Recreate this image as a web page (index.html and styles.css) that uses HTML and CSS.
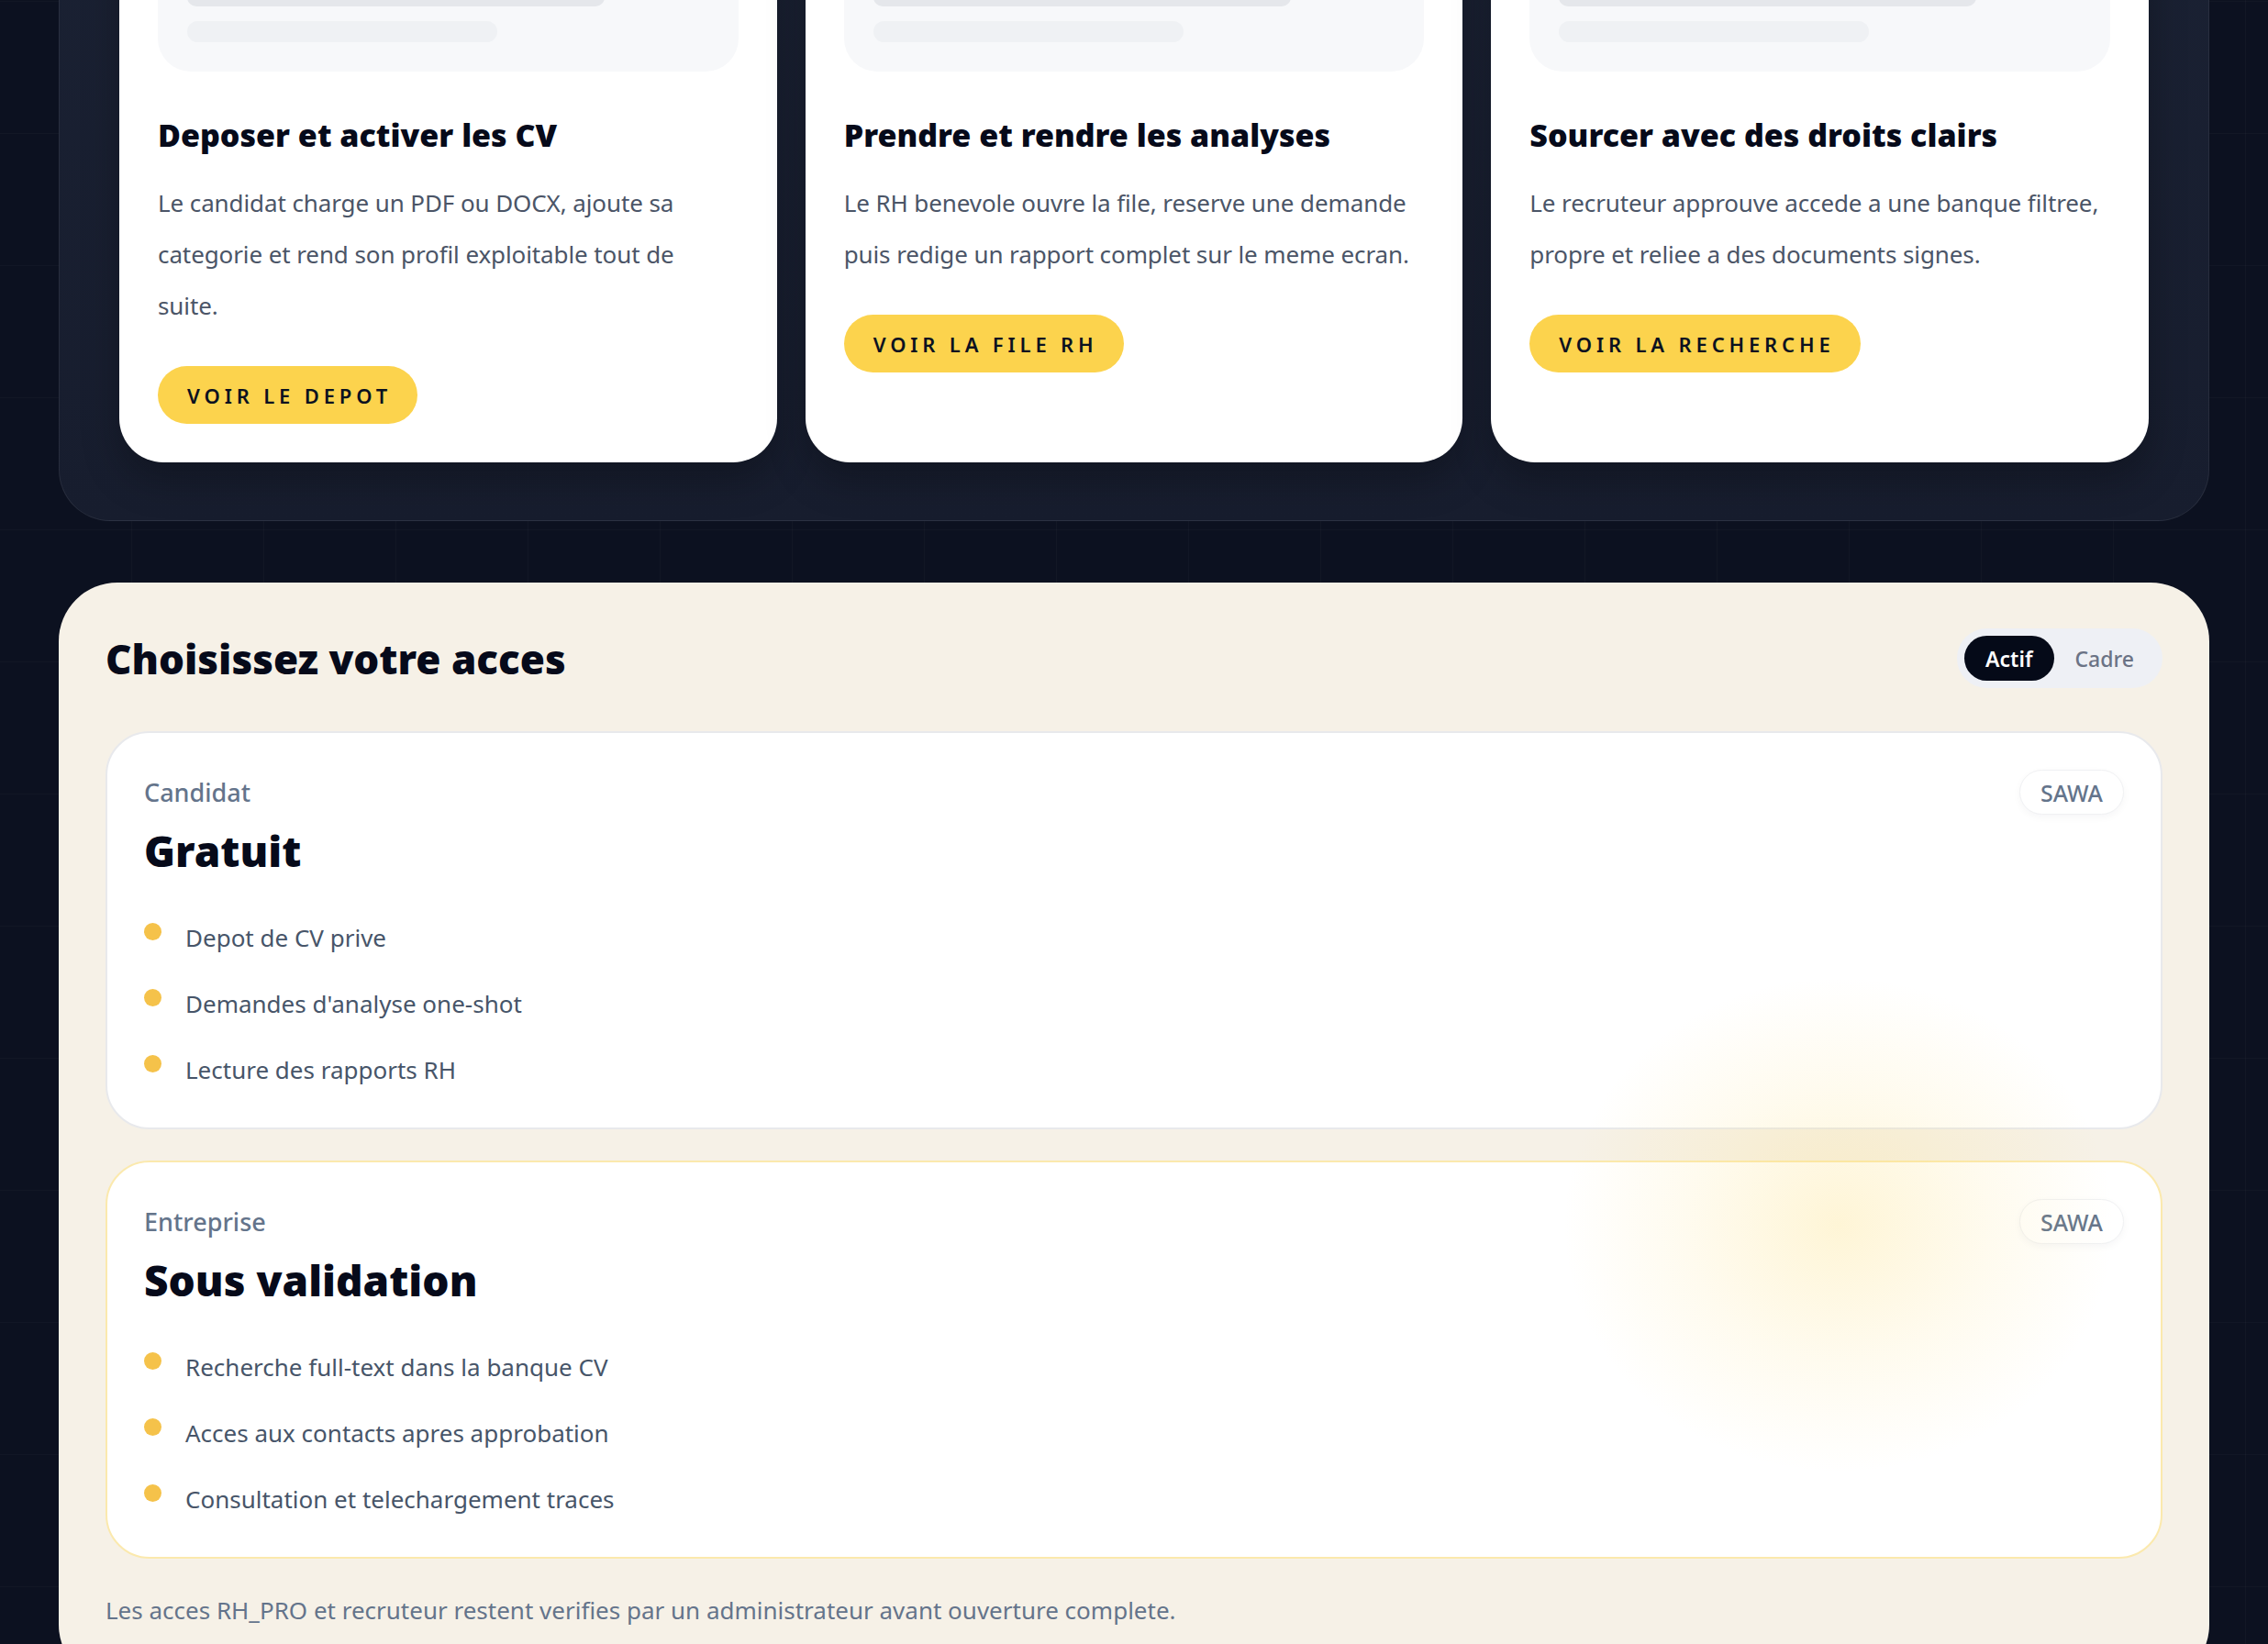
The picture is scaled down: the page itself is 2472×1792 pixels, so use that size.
FILE: index.html
```html
<!DOCTYPE html>
<html lang="fr">

<head>
    <meta charset="UTF-8">
    <meta name="viewport" content="width=device-width, initial-scale=1.0">
    <title>SAWA - Acces</title>
    <link rel="stylesheet" href="styles.css">
</head>

<body>
    <main class="page">
        <section class="flow">
            <div class="flow-grid">
                <article class="step">
                    <div class="step-preview">
                        <span class="bar bar-dark"></span>
                        <span class="bar bar-light"></span>
                    </div>
                    <h3>Deposer et activer les CV</h3>
                    <p>Le candidat charge un PDF ou DOCX, ajoute sa categorie et rend son profil exploitable tout de suite.</p>
                    <a class="btn-yellow" href="#">Voir le depot</a>
                </article>

                <article class="step">
                    <div class="step-preview">
                        <span class="bar bar-dark"></span>
                        <span class="bar bar-light"></span>
                    </div>
                    <h3>Prendre et rendre les analyses</h3>
                    <p>Le RH benevole ouvre la file, reserve une demande puis redige un rapport complet sur le meme ecran.</p>
                    <a class="btn-yellow" href="#">Voir la file RH</a>
                </article>

                <article class="step">
                    <div class="step-preview">
                        <span class="bar bar-dark"></span>
                        <span class="bar bar-light"></span>
                    </div>
                    <h3>Sourcer avec des droits clairs</h3>
                    <p>Le recruteur approuve accede a une banque filtree, propre et reliee a des documents signes.</p>
                    <a class="btn-yellow" href="#">Voir la recherche</a>
                </article>
            </div>
        </section>

        <section class="access">
            <div class="glow"></div>

            <div class="access-head">
                <h2>Choisissez votre acces</h2>
                <div class="toggle">
                    <button class="active">Actif</button>
                    <button>Cadre</button>
                </div>
            </div>

            <div class="plans">
                <article class="plan">
                    <div class="plan-head">
                        <span class="plan-label">Candidat</span>
                        <span class="badge">SAWA</span>
                    </div>
                    <h3>Gratuit</h3>
                    <ul>
                        <li>Depot de CV prive</li>
                        <li>Demandes d'analyse one-shot</li>
                        <li>Lecture des rapports RH</li>
                    </ul>
                </article>

                <article class="plan plan-pro">
                    <div class="plan-head">
                        <span class="plan-label">Entreprise</span>
                        <span class="badge">SAWA</span>
                    </div>
                    <h3>Sous validation</h3>
                    <ul>
                        <li>Recherche full-text dans la banque CV</li>
                        <li>Acces aux contacts apres approbation</li>
                        <li>Consultation et telechargement traces</li>
                    </ul>
                </article>
            </div>

            <p class="note">Les acces RH_PRO et recruteur restent verifies par un administrateur avant ouverture complete.</p>
        </section>
    </main>
</body>

</html>
```

FILE: styles.css
```css
* {
    margin: 0;
    padding: 0;
    box-sizing: border-box;
}

html,
body {
    height: 100%;
    overflow: hidden;
}

body {
    font-family: 'Noto Sans', 'Open Sans', sans-serif;
    background-color: #0c1120;
    background-image:
        linear-gradient(rgba(255, 255, 255, 0.025) 1px, transparent 1px),
        linear-gradient(90deg, rgba(255, 255, 255, 0.025) 1px, transparent 1px);
    background-size: 144px 144px;
    background-position: -1px 1px;
    color: #0b1120;
}

.page {
    padding: 0 64px;
}

/* top: the three steps (page is scrolled, top of the cards is cut) */

.flow {
    margin-top: -270px;
    padding: 65px 65px 63px;
    border: 1px solid rgba(255, 255, 255, 0.07);
    border-radius: 56px;
    background: linear-gradient(180deg, #1b2234 0%, #171d2e 100%);
}

.flow-grid {
    display: grid;
    grid-template-columns: repeat(3, 1fr);
    gap: 31px;
}

.step {
    background: #fff;
    border-radius: 48px;
    padding: 42px 42px 42px;
    display: flex;
    flex-direction: column;
    align-items: flex-start;
    box-shadow: 0 20px 40px rgba(0, 0, 0, 0.25);
}

.step-preview {
    width: 100%;
    height: 240px;
    background: #f7f8fa;
    border-radius: 36px;
    padding: 0 32px 32px;
    display: flex;
    flex-direction: column;
    justify-content: flex-end;
    gap: 16px;
}

.bar {
    display: block;
    border-radius: 999px;
}

.bar-dark {
    width: 455px;
    height: 20px;
    background: #e5e7eb;
}

.bar-light {
    width: 338px;
    height: 23px;
    background: #eff1f4;
}

.step h3 {
    margin-top: 47px;
    font-size: 34px;
    line-height: 44px;
    font-weight: 900;
    color: #060a1a;
}

.step p {
    margin-top: 24px;
    margin-right: 6px;
    font-size: 26px;
    line-height: 56px;
    letter-spacing: -0.1px;
    color: #4b5567;
}

.btn-yellow {
    margin-top: 38px;
    display: inline-flex;
    align-items: center;
    height: 63px;
    padding: 0 28px 0 32px;
    border-radius: 999px;
    background: #fcd34d;
    color: #0b1120;
    text-decoration: none;
    text-transform: uppercase;
    font-size: 22px;
    font-weight: 600;
    letter-spacing: 0.22em;
}

/* bottom: access plans */

.access {
    position: relative;
    margin-top: 67px;
    padding: 50px 51px 60px;
    background: #f6f1e7;
    border-radius: 64px;
}

.glow {
    position: absolute;
    left: 1640px;
    top: 430px;
    width: 600px;
    height: 540px;
    border-radius: 50%;
    background: radial-gradient(closest-side, rgba(253, 222, 120, 0.3), rgba(253, 222, 120, 0.12) 55%, rgba(253, 222, 120, 0));
    pointer-events: none;
    z-index: 2;
}

.access-head {
    display: flex;
    justify-content: space-between;
    align-items: center;
}

.access-head h2 {
    font-size: 44px;
    line-height: 56px;
    font-weight: 900;
    color: #060a1a;
}

.toggle {
    display: flex;
    padding: 8px;
    background: #eef0f5;
    border-radius: 999px;
}

.toggle button {
    height: 49px;
    padding: 0 23px;
    border: none;
    border-radius: 999px;
    background: none;
    font-family: inherit;
    font-size: 23px;
    font-weight: 500;
    color: #6b7385;
}

.toggle button.active {
    background: #050a18;
    color: #fff;
    font-weight: 600;
}

.plans {
    margin-top: 47px;
    display: flex;
    flex-direction: column;
    gap: 34px;
}

.plan {
    position: relative;
    background: #fff;
    border: 2px solid #e8e9ec;
    border-radius: 48px;
    padding: 40px 40px 43px;
}

.plan-pro {
    border-color: #fbe9ad;
}

.plan-head {
    display: flex;
    justify-content: space-between;
    align-items: center;
}

.plan-label {
    font-size: 27px;
    font-weight: 500;
    color: #64748b;
}

.badge {
    height: 49px;
    padding: 0 22px;
    display: flex;
    align-items: center;
    border-radius: 999px;
    border: 1px solid #f0f1f3;
    background: #fff;
    box-shadow: 0 3px 8px rgba(15, 23, 42, 0.04);
    font-size: 25px;
    font-weight: 500;
    color: #64748b;
}

.plan h3 {
    margin-top: 13px;
    font-size: 46px;
    line-height: 53px;
    font-weight: 900;
    color: #060a1a;
}

.plan ul {
    margin-top: 48px;
    list-style: none;
    display: flex;
    flex-direction: column;
    gap: 32px;
}

.plan li {
    display: flex;
    align-items: flex-start;
    gap: 26px;
    font-size: 26px;
    line-height: 40px;
    color: #475569;
}

.plan li::before {
    content: '';
    flex: none;
    width: 19px;
    height: 19px;
    margin-top: 4px;
    border-radius: 50%;
    background: #f5c24a;
}

.note {
    margin-top: 36px;
    font-size: 26px;
    line-height: 40px;
    color: #64748b;
}
```
